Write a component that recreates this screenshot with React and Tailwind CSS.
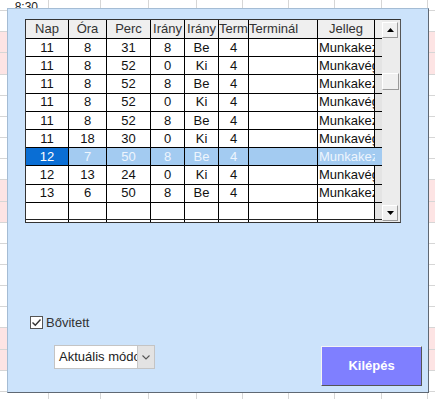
import React from 'react';

const sheetCols = [49, 52, 48, 48, 46, 46, 46, 47, 46, 40];
const sheetRows = [11, 21, 21, 22, 21, 21, 21, 21, 21, 22, 21, 21, 21, 21, 21, 21, 22, 21, 21, 30];
const pinkRows = [2, 3, 9, 10, 16, 17];

const cols = [
  { label: 'Nap', w: 43 },
  { label: 'Óra', w: 38 },
  { label: 'Perc', w: 44 },
  { label: 'Irány', w: 34 },
  { label: 'Irány', w: 34 },
  { label: 'Term', w: 30 },
  { label: 'Terminál', w: 69, left: true },
  { label: 'Jelleg', w: 57 },
];

const rows = [
  ['11', '8', '31', '8', 'Be', '4', '', 'Munkakezdés'],
  ['11', '8', '52', '0', 'Ki', '4', '', 'Munkavége'],
  ['11', '8', '52', '8', 'Be', '4', '', 'Munkakezdés'],
  ['11', '8', '52', '0', 'Ki', '4', '', 'Munkavége'],
  ['11', '8', '52', '8', 'Be', '4', '', 'Munkakezdés'],
  ['11', '18', '30', '0', 'Ki', '4', '', 'Munkavége'],
  ['12', '7', '50', '8', 'Be', '4', '', 'Munkakezdés'],
  ['12', '13', '24', '0', 'Ki', '4', '', 'Munkavége'],
  ['13', '6', '50', '8', 'Be', '4', '', 'Munkakezdés'],
];

const SELECTED = 6;

function Sheet() {
  return (
    <div className="flex flex-col">
      {sheetRows.map((h, r) => (
        <div key={r} className={`flex ${pinkRows.includes(r) ? 'bg-[#fde4e4]' : 'bg-white'}`} style={{ height: h }}>
          {sheetCols.map((w, c) => (
            <div
              key={c}
              className="shrink-0 border-r border-b border-[#d6d6d6] flex items-end justify-end overflow-hidden pr-[10px] text-[12px] leading-none text-[#222]"
              style={{ width: w }}
            >
              {r === 0 && c === 0 ? <span className="relative top-[3px]">8:30</span> : ''}
            </div>
          ))}
        </div>
      ))}
    </div>
  );
}

function ArrowUp() {
  return (
    <svg width="7" height="4" viewBox="0 0 7 4">
      <path d="M3.5 0 L7 4 L0 4 Z" fill="#000" />
    </svg>
  );
}

function ArrowDown() {
  return (
    <svg width="7" height="4" viewBox="0 0 7 4">
      <path d="M0 0 L7 0 L3.5 4 Z" fill="#000" />
    </svg>
  );
}

function Grid() {
  return (
    <div className="ml-[17px] mt-[10px] w-[376px] h-[204px] flex border border-[#333] border-r-[#555] bg-white">
      <div className="flex flex-col w-[356px]">
        {/* fejléc */}
        <div className="flex h-[19px] shrink-0 border-b border-black bg-[#efefef]">
          {cols.map((c, i) => (
            <div
              key={i}
              className={`shrink-0 border-r border-black flex items-center overflow-hidden whitespace-nowrap text-[13px] text-[#333] ${c.left ? 'justify-start' : 'justify-center'}`}
              style={{ width: c.w }}
            >
              {c.label}
            </div>
          ))}
          <div className="w-[7px] shrink-0 bg-[#efefef]" />
        </div>

        {rows.map((row, r) => {
          const sel = r === SELECTED;
          return (
            <div key={r} className="flex h-[18.2px] shrink-0 border-b border-black">
              {row.map((v, i) => {
                let bg = 'bg-white text-[#111]';
                if (sel) bg = i === 0 ? 'bg-[#0a6ed4] text-white' : 'bg-[#a3cbf1] text-[#eef5fd]';
                const jelleg = i === 7;
                return (
                  <div
                    key={i}
                    className={`shrink-0 flex items-center overflow-hidden whitespace-nowrap text-[13px] ${bg} ${jelleg ? (sel ? 'justify-start pl-[1px]' : 'justify-start pl-[1px] border-r border-black') : 'justify-center border-r border-black'}`}
                    style={{ width: cols[i].w }}
                  >
                    {v}
                  </div>
                );
              })}
              <div className={`w-[7px] shrink-0 ${sel ? 'bg-[#a3cbf1]' : 'bg-[#e4e4e4]'}`} />
            </div>
          );
        })}

        {/* üres sor */}
        <div className="flex flex-1 border-b border-[#222]">
          {cols.map((c, i) => (
            <div key={i} className="shrink-0 border-r border-black bg-white" style={{ width: c.w }} />
          ))}
          <div className="w-[7px] shrink-0 bg-[#e4e4e4]" />
        </div>
        <div className="flex h-[2px] shrink-0">
          {cols.map((c, i) => (
            <div key={i} className="shrink-0 border-r border-black bg-white" style={{ width: c.w }} />
          ))}
          <div className="w-[7px] shrink-0 bg-[#e4e4e4]" />
        </div>
      </div>

      {/* görgetősáv */}
      <div className="w-[18px] bg-[#ececec] flex flex-col items-start">
        <div className="mt-[2px] w-[16px] h-[16px] bg-[#f0f0f0] border border-t-white border-l-white border-r-[#9a9a9a] border-b-[#9a9a9a] flex items-center justify-center">
          <ArrowUp />
        </div>
        <div className="mt-[35px] w-[17px] h-[17px] bg-[#f0f0f0] border border-t-white border-l-white border-r-[#9a9a9a] border-b-[#9a9a9a]" />
        <div className="mt-auto mb-[1px] w-[16px] h-[16px] bg-[#f0f0f0] border border-t-white border-l-white border-r-[#9a9a9a] border-b-[#9a9a9a] flex items-center justify-center">
          <ArrowDown />
        </div>
      </div>
    </div>
  );
}

export default function App() {
  return (
    <div className="relative w-[435px] h-[399px] overflow-hidden bg-white font-['Liberation_Sans',Arial,sans-serif]">
      <Sheet />

      <div className="absolute left-[7px] top-[8px] w-[422px] h-[385px] bg-[#cce3fb] border border-[#a4bcd4] border-r-[#5f6873] border-b-[#5f6873] flex flex-col">
        <Grid />

        <label className="mt-[93px] ml-[22px] flex items-center gap-[3px] h-[13px]">
          <span className="w-[13px] h-[13px] bg-white border border-[#555] flex items-center justify-center">
            <svg width="11" height="11" viewBox="0 0 11 11">
              <path d="M1.5 5.5 L4.3 8.3 L9.5 2.5" stroke="#333" strokeWidth="1.4" fill="none" />
            </svg>
          </span>
          <span className="text-[13px] text-[#333] leading-none">Bővitett</span>
        </label>

        <div className="mt-[16px] flex items-start">
          <div className="ml-[46px] w-[101px] h-[24px] flex border border-[#c4c4c4] bg-white">
            <div className="flex-1 flex items-center pl-[4px] overflow-hidden whitespace-nowrap text-[13px] text-[#222]">
              Aktuális módosítás
            </div>
            <div className="w-[17px] bg-[#e3e3e3] border-l border-[#c8c8c8] flex items-center justify-center">
              <svg width="8" height="5" viewBox="0 0 8 5">
                <path d="M0.5 0.5 L4 4 L7.5 0.5" stroke="#555" strokeWidth="1.1" fill="none" />
              </svg>
            </div>
          </div>

          <button className="ml-auto mr-[6px] mt-[1px] w-[101px] h-[40px] bg-[#7f7fff] border border-t-[#f4f4f4] border-l-[#f4f4f4] border-r-[#555] border-b-[#555] text-white text-[13px] font-bold">
            Kilépés
          </button>
        </div>
      </div>
    </div>
  );
}
